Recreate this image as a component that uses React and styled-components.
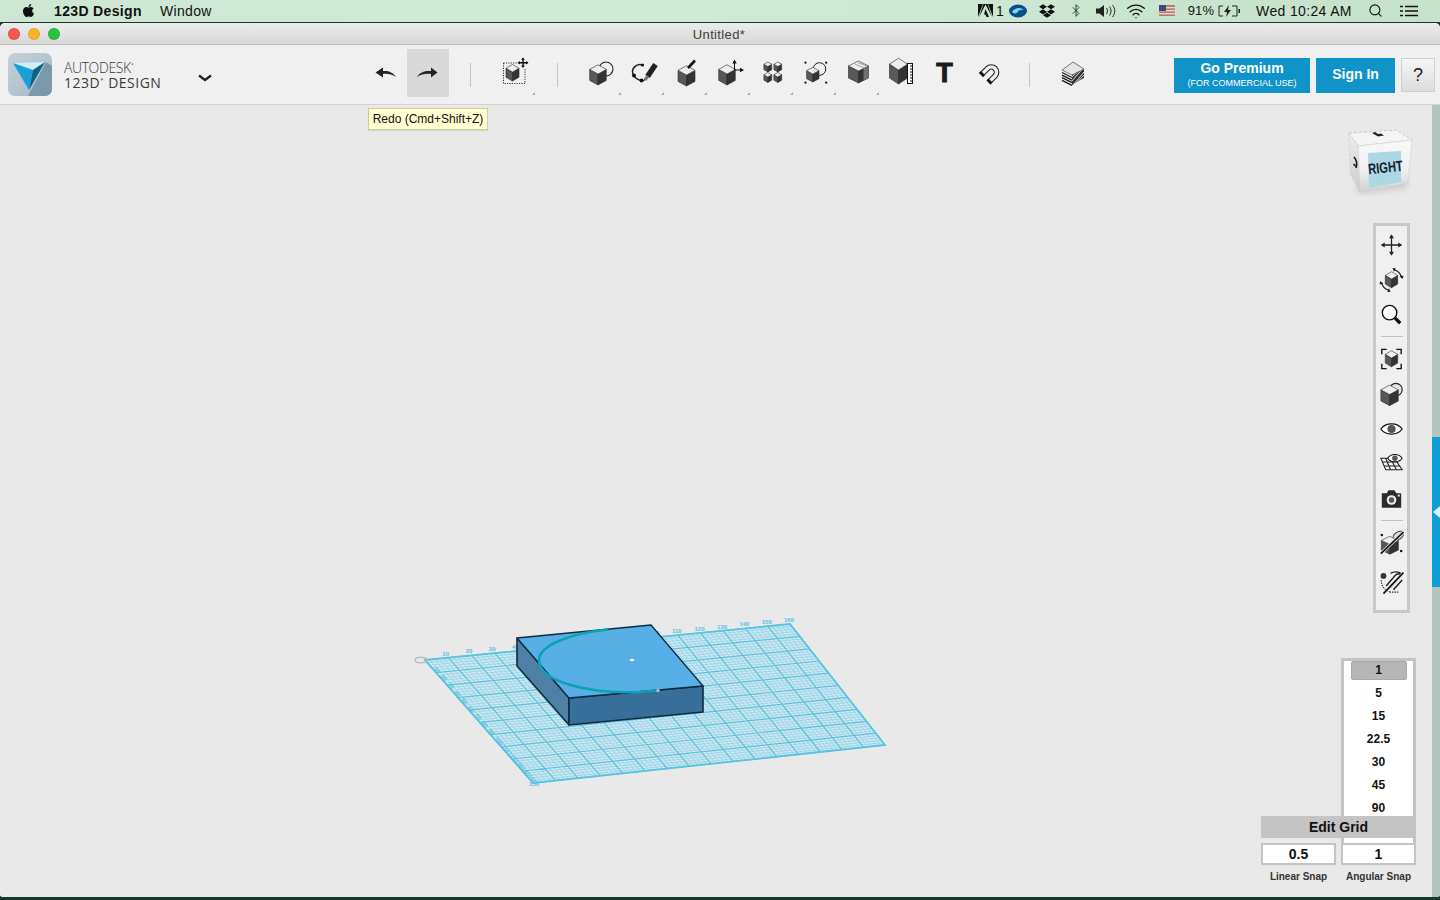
import React from 'react';
import styled, { createGlobalStyle } from 'styled-components';
import { FaApple, FaDropbox } from 'react-icons/fa';
import { Bluetooth, Wifi, Search } from 'lucide-react';

const Global = createGlobalStyle`
  html, body { margin: 0; padding: 0; height: 100%; overflow: hidden; background: #17382c; }
  #root { height: 100%; }
  * { box-sizing: border-box; }
`;

const Screen = styled.div`
  width: 1440px; height: 900px; display: flex; flex-direction: column;
  font-family: "Liberation Sans", Arial, sans-serif; background: #17382c;
`;
const MenuBar = styled.div`
  height: 23px; flex: none; display: flex; align-items: center; padding: 0 0 1px 21px;
  background: linear-gradient(90deg, #cde6d3 0%, #d2ead8 40%, #c6e2ca 100%);
  border-bottom: 1px solid #17382c; color: #111; font-size: 14px;
`;
const MenuItem = styled.span`
  margin-left: ${p => p.$ml || 0}px; font-weight: ${p => (p.$bold ? 700 : 400)}; white-space: nowrap; letter-spacing: 0.35px;
`;
const MenuExtras = styled.div`
  margin-left: auto; display: flex; align-items: center; height: 22px; color: #111;
`;
const Extra = styled.span`
  display: inline-flex; align-items: center; justify-content: center; width: ${p => p.$w}px;
  margin-left: ${p => p.$ml || 0}px; font-size: ${p => p.$fs || 14}px; white-space: nowrap; letter-spacing: ${p => p.$ls || 0}px;
`;
const Window = styled.div`
  flex: 1; display: flex; flex-direction: column; min-height: 0; margin-bottom: 3px;
  border-radius: 5px 5px 3px 3px; overflow: hidden; background: #e9e9e9;
`;
const TitleBar = styled.div`
  height: 22px; flex: none; position: relative; display: flex; align-items: center; justify-content: center;
  padding: 1px 2px 0 0; background: linear-gradient(#ececec, #d9d9d9); border-bottom: 1px solid #bdbdbd;
  font-size: 13px; letter-spacing: 0.35px; color: #3c3c3c;
`;
const Lights = styled.div`
  position: absolute; left: 8px; top: 5px; display: flex; gap: 8px;
`;
const Light = styled.span`
  width: 12px; height: 12px; border-radius: 50%; background: ${p => p.$c}; box-shadow: inset 0 0 0 1px rgba(0,0,0,.08);
`;
const Toolbar = styled.div`
  height: 60px; flex: none; display: flex; align-items: flex-start; padding: 4px 5px 0 8px;
  background: #f0f0f0; border-bottom: 1px solid #d2d2d2;
`;
const Logo = styled.div`
  width: 44px; height: 43px; flex: none; border-radius: 7px; overflow: hidden; margin-top: 4px;
  background: linear-gradient(135deg, #c6d2da, #a3b6c3);
`;
const Brand = styled.div`
  width: 110px; margin-left: 12px; margin-top: 11px; font-family: "Open Sans", sans-serif; color: #3a3a3a; line-height: 15px;
  sup { font-size: 6px; line-height: 0; vertical-align: 6px; }
`;
const BrandTop = styled.div`
  height: 15px; font-size: 14px; font-weight: 300; letter-spacing: -0.4px; white-space: nowrap;
`;
const BrandBottom = styled.div`
  height: 15px; font-size: 14px; letter-spacing: 0.5px; white-space: nowrap;
`;
const Chevron = styled.div`
  width: 14px; margin-left: 24px; margin-top: 25px; flex: none; display: flex;
`;
const UndoGroup = styled.div`
  margin-left: 153px; display: flex;
`;
const Slot = styled.div`
  width: ${p => p.$w || 43}px; height: 48px; flex: none; position: relative; display: flex; align-items: center; justify-content: center;
  background: ${p => (p.$active ? '#d8d8d8' : 'transparent')};
  &::after {
    content: ''; display: ${p => (p.$corner ? 'block' : 'none')}; position: absolute; right: 1px; bottom: 2px;
    border-style: solid; border-width: 0 0 3px 3px; border-color: transparent transparent #a8a8a8 transparent;
  }
`;
const Separator = styled.div`
  width: 1px; height: 24px; flex: none; background: #c4c4c4; margin: 14px ${p => p.$r || 21}px 0 ${p => p.$l || 21}px;
`;
const TIcon = styled.span`
  font-family: "Liberation Sans", sans-serif; font-weight: 700; font-size: 27px; line-height: 1; color: #1b1b1b;
  -webkit-text-stroke: 1px #1b1b1b;
`;
const Actions = styled.div`
  margin-left: auto; display: flex; gap: 6px; padding-top: 9px;
`;
const BlueButton = styled.div`
  width: ${p => p.$w}px; height: 35px; display: flex; flex-direction: column; align-items: center; justify-content: center;
  padding-bottom: 2px; background: #0f93c8; color: #fff; font-weight: 700; font-size: 14px; line-height: 17px;
`;
const SubLabel = styled.span`
  font-size: 9px; font-weight: 400; line-height: 12px; white-space: nowrap;
`;
const HelpButton = styled.div`
  width: 34px; height: 34px; display: flex; align-items: center; justify-content: center;
  background: linear-gradient(#f6f6f6, #dcdcdc); border: 1px solid #cfcfcf; font-size: 18px; color: #222;
`;
const Workspace = styled.div`
  flex: 1; display: flex; min-height: 0;
`;
const Viewport = styled.div`
  flex: 1; position: relative; background: #e9e9e9; overflow: hidden;
`;
const Scene = styled.svg`
  position: absolute; left: 0; top: 0;
`;
const Tooltip = styled.div`
  position: absolute; left: 368px; top: 3px; width: 120px; height: 22px; display: flex; align-items: center; justify-content: center;
  background: #ffffd2; border: 1px solid #cdcd9e; font-size: 12px; color: #111; white-space: nowrap; box-shadow: 0 1px 1px rgba(0,0,0,.08);
`;
const NavCube = styled.svg`
  position: absolute; right: 12px; top: 15px;
`;
const ToolPanel = styled.div`
  position: absolute; right: 22px; top: 118px; width: 37px; height: 390px; display: flex; flex-direction: column; align-items: center;
  padding-top: 1px; background: #f0f0f0; border: 3px solid #c8c8c8;
`;
const ToolSlot = styled.div`
  height: 35px; width: 100%; flex: none; display: flex; align-items: center; justify-content: center; margin-top: ${p => p.$mt || 0}px;
`;
const ToolRule = styled.div`
  width: 22px; height: 1px; flex: none; background: #c2c2c2; margin: 4px 0 ${p => p.$b || 4}px;
`;
const SnapPanel = styled.div`
  position: absolute; right: 16px; top: 553px; width: 155px; display: flex; flex-direction: column; align-items: flex-end;
`;
const SnapList = styled.div`
  width: 75px; height: 158px; display: flex; flex-direction: column; align-items: center;
  background: #fff; border: solid #c4c4c4; border-width: 3px 3px 0;
`;
const SnapItem = styled.div`
  width: 56px; height: 19px; flex: none; margin-bottom: 4px; padding-bottom: 1px; display: flex; align-items: center; justify-content: center;
  border-radius: 3px; font-size: 12px; font-weight: 700; color: #111;
  background: ${p => (p.$on ? '#b6b6b6' : 'transparent')}; box-shadow: ${p => (p.$on ? 'inset 0 0 0 1px #a8a8a8' : 'none')};
`;
const EditBar = styled.div`
  width: 155px; height: 22px; display: flex; align-items: center; justify-content: center;
  background: #c4c4c4; font-size: 14px; font-weight: 700; color: #111;
`;
const ListTail = styled.div`
  width: 75px; height: 5px; background: #fff; border: solid #c4c4c4; border-width: 0 3px;
`;
const SnapRow = styled.div`
  width: 155px; display: flex; gap: 5px;
`;
const SnapCol = styled.div`
  width: 75px; display: flex; flex-direction: column; align-items: center;
`;
const SnapField = styled.div`
  width: 75px; height: 22px; display: flex; align-items: center; justify-content: center;
  background: #fff; border: 2px solid #c4c4c4; font-size: 14px; font-weight: 700; color: #111;
`;
const SnapLabel = styled.div`
  margin-top: 6px; font-size: 10px; line-height: 12px; font-weight: 700; color: #333; white-space: nowrap;
`;
const SideStrip = styled.div`
  width: 8px; flex: none; position: relative; background: #b4c4bd;
`;
const SideTab = styled.div`
  position: absolute; left: 0; top: 332px; width: 8px; height: 150px; display: flex; align-items: center; justify-content: flex-end;
  background: #0d9fd3;
  &::after { content: ''; border-style: solid; border-width: 6px 7px 6px 0; border-color: transparent #d8f0f8 transparent transparent; }
`;

/* ---------- icon helpers ---------- */
const Cube = ({ x, y, r, w: width, top = '#eeeeee', left = '#585858', right = '#333333' }) => {
  const w = width || r * 0.9, h = r * 0.42;
  return (
    <g stroke="#2a2a2a" strokeWidth="0.6" strokeLinejoin="round">
      <polygon points={`${x},${y} ${x - w},${y - h} ${x - w},${y + r - h} ${x},${y + r}`} fill={left} />
      <polygon points={`${x},${y} ${x + w},${y - h} ${x + w},${y + r - h} ${x},${y + r}`} fill={right} />
      <polygon points={`${x},${y} ${x - w},${y - h} ${x},${y - h * 2} ${x + w},${y - h}`} fill={top} />
    </g>
  );
};
const Ic = ({ children, s = 32 }) => <svg width={s} height={s} viewBox="0 0 32 32" fill="none">{children}</svg>;
const Dot = ({ x, y, r = 1.1 }) => <circle cx={x} cy={y} r={r} fill="#111" />;

const Undo = () => <Ic><path d="M13 10.5 L5.5 15.5 L13 20.5 V17 C17 16.5 22 17 26 20 C23 15 18 13.5 13 14 Z" fill="#222" /></Ic>;
const Redo = () => <Ic><path d="M19 10.5 L25.5 15.5 L19 20.5 V17 C14 16.5 9 17 5 20 C8 15 13 13.5 19 14 Z" fill="#222" /></Ic>;
const BoxSelect = () => (
  <Ic>
    <path d="M4.5 6 H19 M4.5 6 V26.5 H26 V11" stroke="#333" strokeWidth="1" strokeDasharray="1.2 1.2" />
    <Cube x={13.5} y={15} r={9} w={6.5} />
    <path d="M24 1.5 V10 M19.5 5.7 H28.5" stroke="#111" strokeWidth="1.4" />
    <path d="M24 0.5 L22.2 3 H25.8 Z M24 11 L22.2 8.5 H25.8 Z M18.5 5.7 L21 3.9 V7.5 Z M29.5 5.7 L27 3.9 V7.5 Z" fill="#111" />
  </Ic>
);
const Primitive = () => <Ic><circle cx="21" cy="12" r="7" stroke="#222" strokeWidth="1.1" /><Cube x={13} y={17} r={11} w={8.3} /></Ic>;
const Sketch = () => (
  <Ic>
    <path d="M14.5 8 C8 6 3 12 5 17 C6.5 20.5 10 23 14 24 C15.5 24 16.5 23 17 22" stroke="#222" strokeWidth="1.5" />
    <Dot x={14.5} y={8} r={1.6} /><Dot x={6} y={18.5} r={1.9} /><Dot x={13.5} y={23.5} r={1.9} />
    <path d="M19.5 19.5 L27.5 7.5" stroke="#222" strokeWidth="5.4" />
    <path d="M17 23 L20 19" stroke="#777" strokeWidth="3" />
  </Ic>
);
const Construct = () => <Ic><Cube x={15.5} y={18} r={11} w={8.5} /><path d="M17 11 L24 3.5" stroke="#111" strokeWidth="2.6" /></Ic>;
const Modify = () => (
  <Ic>
    <Cube x={13} y={17} r={11} w={8.3} />
    <path d="M20.5 13 V5 M20.5 13 L28 13" stroke="#111" strokeWidth="1" />
    <path d="M20.5 2.5 L18.3 6.5 H22.7 Z M30 13 L26 10.8 V15.2 Z" fill="#111" />
  </Ic>
);
const Pattern = () => (
  <Ic>
    <Cube x={10.8} y={9.5} r={5.4} w={3.9} /><Cube x={20.8} y={9.5} r={5.4} w={3.9} />
    <Cube x={10.8} y={20} r={5.4} w={3.9} /><Cube x={20.8} y={20} r={5.4} w={3.9} />
  </Ic>
);
const Grouping = () => (
  <Ic>
    <circle cx="19.5" cy="12" r="6.3" stroke="#222" strokeWidth="1" />
    <Cube x={12.8} y={17} r={8} w={6.2} />
    <Dot x={5.5} y={5.7} /><Dot x={26.2} y={5.7} /><Dot x={5.5} y={25.7} /><Dot x={26.2} y={25.7} />
  </Ic>
);
const Combine = () => (
  <Ic>
    <Cube x={15.5} y={14} r={12} w={10} />
    <polygon points="25.5,9 25.5,21 20.5,23.5 20.5,11.5" fill="#707070" />
    <path d="M12 7 L22 11.5 M15 5.5 L25 9.5" stroke="#8a8a8a" strokeWidth=".8" />
  </Ic>
);
const Measure = () => (
  <Ic>
    <Cube x={12.5} y={13} r={14} w={9} />
    <rect x="21.5" y="6.5" width="5" height="20" fill="#fff" stroke="#111" strokeWidth="1" />
    <path d="M24 9 H26.5 M24 12 H26.5 M24 15 H26.5 M24 18 H26.5 M24 21 H26.5 M24 24 H26.5" stroke="#111" strokeWidth="1" />
  </Ic>
);
const Magnet = () => {
  const d = 'M9 18 L15.5 11.5 A5.3 5.3 0 0 1 23 19 L16.5 25.5';
  return (
    <Ic>
      <path d={d} stroke="#222" strokeWidth="5.6" />
      <path d={d} stroke="#f0f0f0" strokeWidth="3.4" />
      <path d="M9 18 L11 16 M16.5 25.5 L18.5 23.5" stroke="#111" strokeWidth="5.6" />
    </Ic>
  );
};
const Layers = () => (
  <Ic>
    <polygon points="15,18 27,12 27,21 15,28" fill="#333" />
    <path d="M17 27 L27 15 M20 25.5 L27 18 M15 24 L25 12.5 M15 20 L21 14.5" stroke="#eee" strokeWidth=".9" />
    <polygon points="16,5 27,12 15,18 5,13" fill="#e6e6e6" stroke="#444" strokeWidth=".7" />
    {[0, 1, 2, 3].map(i => (
      <path key={i} d={`M5 ${15.5 + i * 2.6} L15 ${20.5 + i * 2.6}`} stroke="#1c1c1c" strokeWidth="1.3" />
    ))}
  </Ic>
);
const Move = () => (
  <Ic>
    <path d="M16 6 V26 M6 16 H26" stroke="#222" strokeWidth="1.3" />
    <path d="M16 5 L13.5 9 H18.5 Z M16 27 L13.5 23 H18.5 Z M5 16 L9 13.5 V18.5 Z M27 16 L23 13.5 V18.5 Z" fill="#222" />
  </Ic>
);
const Orbit = () => (
  <Ic>
    <Cube x={16} y={15} r={9} w={6.4} />
    <path d="M19 5.5 C22.5 6.5 25.5 9.5 26.3 13.5 M13 26.5 C9.5 25.5 6.5 22.5 5.7 18.5" stroke="#222" strokeWidth="1.3" />
    <path d="M17 3.5 L20.5 3.8 L18.5 7.5 Z M15 28.5 L11.5 28.2 L13.5 24.5 Z M27.5 15 L24.5 12 L28.5 11.5 Z M4.5 17 L7.5 20 L3.5 20.5 Z" fill="#222" />
  </Ic>
);
const Zoom = () => (
  <Ic><circle cx="14" cy="13.5" r="7.5" stroke="#111" strokeWidth="1.4" fill="#fff" /><path d="M19.5 19 L25 24.5" stroke="#111" strokeWidth="3.4" /></Ic>
);
const Fit = () => (
  <Ic>
    <path d="M6 11 V6 H11 M21 6 H26 V11 M26 21 V26 H21 M11 26 H6 V21" stroke="#111" strokeWidth="1.4" />
    <Cube x={16} y={15} r={9} w={6.4} />
  </Ic>
);
const Persp = () => <Ic><circle cx="20.5" cy="11.5" r="6.5" fill="#e6e6e6" stroke="#222" strokeWidth="1.2" /><Cube x={14} y={16.5} r={11.5} w={9} /></Ic>;
const Eye = () => (
  <Ic>
    <path d="M5 16 C10 9 22 9 27 16 C22 23 10 23 5 16 Z" stroke="#111" strokeWidth="1.3" fill="#fff" />
    <circle cx="16" cy="16" r="4.2" fill="#555" />
  </Ic>
);
const GridEye = () => (
  <Ic>
    <polygon points="5,10 19,10 27,22 10,22" fill="#f4f4f4" stroke="#222" strokeWidth="1.1" />
    <path d="M7 14 H22 M8.5 18 H25 M10 10 L15 22 M15 10 L21 22" stroke="#222" strokeWidth="1.1" />
    <path d="M12 10 C15.5 5 23.5 5 27 10 C23.5 15 15.5 15 12 10 Z" fill="#fff" stroke="#111" strokeWidth="1.1" />
    <circle cx="19.5" cy="10" r="2.8" fill="#555" />
  </Ic>
);
const Camera = () => (
  <Ic>
    <path d="M6 10 H11 L13 7 H19 L21 10 H26 V25 H6 Z" fill="#2b2b2b" />
    <circle cx="16" cy="17" r="5" fill="#eee" /><circle cx="16" cy="17" r="2.8" fill="#555" />
    <rect x="22.5" y="11.5" width="2" height="2" fill="#eee" />
  </Ic>
);
const HideCube = () => (
  <Ic>
    <ellipse cx="23" cy="8.5" rx="6" ry="3.8" transform="rotate(-35 23 8.5)" fill="#ddd" stroke="#444" strokeWidth="1" />
    <Cube x={14.3} y={17.5} r={10} w={8.8} />
    <path d="M5 27 L28.3 4.7" stroke="#f0f0f0" strokeWidth="3.2" />
    <path d="M5 27 L28.3 4.7" stroke="#111" strokeWidth="1.7" />
    <Dot x={6} y={7.7} r={1.3} /><Dot x={26} y={24.3} r={1.3} />
  </Ic>
);
const HideSketch = () => (
  <Ic>
    <circle cx="7.7" cy="8.7" r="3" fill="#333" />
    <path d="M5.5 13 C5 18 9 24 14 25 M14 25.5 H24" stroke="#333" strokeWidth="1.2" strokeDasharray="1.5 1" />
    <path d="M15 6 C20 3 26 5 27 8 M10.5 19 L20 8 C22 6 25 6.5 26 8 M13.5 22 L24 10.5 M18 23 L27 13" stroke="#222" strokeWidth="1.5" />
    <path d="M7.7 27 L28.3 5.3" stroke="#f0f0f0" strokeWidth="3" />
    <path d="M7.7 27 L28.3 5.3" stroke="#111" strokeWidth="1.7" />
  </Ic>
);

/* ---------- grid ---------- */
const quad = [[425, 660], [790, 624], [885, 745], [533, 783]];
const homography = () => {
  const [[x0, y0], [x1, y1], [x2, y2], [x3, y3]] = quad;
  const dx1 = x1 - x2, dx2 = x3 - x2, sx = x0 - x1 + x2 - x3;
  const dy1 = y1 - y2, dy2 = y3 - y2, sy = y0 - y1 + y2 - y3;
  const den = dx1 * dy2 - dx2 * dy1;
  const g = (sx * dy2 - dx2 * sy) / den, h = (dx1 * sy - sx * dy1) / den;
  const a = x1 - x0 + g * x1, b = x3 - x0 + h * x3, c = x0;
  const d = y1 - y0 + g * y1, e = y3 - y0 + h * y3, f = y0;
  return (u, v) => {
    const w = g * u + h * v + 1;
    return [(a * u + b * v + c) / w, (d * u + e * v + f) / w];
  };
};
const proj = homography();
const UDIV = 16, VDIV = 10, USUB = 5, VSUB = 5;
const line = (p, q) => `M${p[0].toFixed(1)} ${p[1].toFixed(1)}L${q[0].toFixed(1)} ${q[1].toFixed(1)}`;
const buildLines = major => {
  let d = '';
  const us = major ? 1 : USUB, vs = major ? 1 : VSUB;
  const nu = UDIV * us, nv = VDIV * vs;
  for (let i = 0; i <= nu; i++) if (major || i % us) d += line(proj(i / nu, 0), proj(i / nu, 1));
  for (let j = 0; j <= nv; j++) if (major || j % vs) d += line(proj(0, j / nv), proj(1, j / nv));
  return d;
};
const minorPath = buildLines(false);
const majorPath = buildLines(true);
const topLabels = Array.from({ length: UDIV }, (_, i) => ({ p: proj((i + 1) / UDIV, 0), t: String((i + 1) * 10) }));
const leftLabels = Array.from({ length: 15 }, (_, i) => ({ p: proj(0, (i + 1) / 16), t: String((i + 1) * 10) }));
const corners = quad.map(p => p.join(',')).join(' ');

const GridScene = () => (
  <Scene width="1432" height="791" viewBox="0 105 1432 791">
    <polygon points={corners} fill="#cfe8f1" />
    <path d={minorPath} stroke="#8fd2e6" strokeWidth=".75" fill="none" />
    <path d={majorPath} stroke="#5cc0dc" strokeWidth="1.2" fill="none" />
    <polygon points={corners} fill="none" stroke="#58c4e0" strokeWidth="1.8" />
    <ellipse cx="421" cy="660" rx="6" ry="2.8" fill="none" stroke="#b6bfc4" strokeWidth="1.5" />
    <g fontFamily="Liberation Sans, sans-serif" fontSize="6" fontWeight="700" fill="#58c0dc">
      {topLabels.map(l => <text key={l.t} x={l.p[0] - 6} y={l.p[1] - 2}>{l.t}</text>)}
      {leftLabels.map(l => (
        <text key={l.t} x={l.p[0] + 1} y={l.p[1] + 1} transform={`rotate(50 ${l.p[0] + 1} ${l.p[1] + 1})`}>{l.t}</text>
      ))}
      <text x="529" y="786">150</text>
    </g>
    <g strokeLinejoin="round" stroke="#0d2c44" strokeWidth="1.6">
      <polygon points="517,638 569,698 569,725 517,666" fill="#4e7fa4" />
      <polygon points="569,698 703,686 703,712 569,725" fill="#376e9a" />
      <polygon points="517,638 651,625 703,686 569,698" fill="#58afe6" strokeWidth="1.3" />
    </g>
    <path d="M608 629.5 C572 633 539 645 539 660 C539 680 582 694 640 692 L658 690.5" fill="none" stroke="#0ca2b4" strokeWidth="2.6" />
    <ellipse cx="632" cy="660" rx="2.2" ry="1.2" fill="#fff" />
    <circle cx="658" cy="690.5" r="1.8" fill="#8fc3d2" />
  </Scene>
);

const ViewCube = () => (
  <NavCube width="80" height="90" viewBox="0 0 80 90">
    <defs>
      <linearGradient id="fr" x1="0" y1="0" x2="0" y2="1"><stop offset="0" stopColor="#f8f8f8" /><stop offset=".6" stopColor="#efefef" /><stop offset="1" stopColor="#cfcfcf" /></linearGradient>
      <linearGradient id="sd" x1="0" y1="0" x2="0" y2="1"><stop offset="0" stopColor="#eeeeee" /><stop offset="1" stopColor="#cccccc" /></linearGradient>
      <filter id="bl"><feGaussianBlur stdDeviation="3" /></filter>
      <filter id="soft"><feGaussianBlur stdDeviation=".35" /></filter>
    </defs>
    <polygon points="18,74 66,68 68,60 18,62" fill="#c0c0c0" filter="url(#bl)" opacity=".75" />
    <g filter="url(#soft)">
      <polygon points="9,13 57,10 72,20 18,26" fill="#f4f4f4" stroke="#bdbdbd" strokeWidth=".8" strokeDasharray="3 2" />
      <polygon points="9,13 18,26 20,72 10,54" fill="url(#sd)" stroke="#c8c8c8" strokeWidth=".6" strokeDasharray="3 2" />
      <polygon points="18,26 72,20 68,63 20,72" fill="url(#fr)" stroke="#d0d0d0" strokeWidth=".6" />
      <polygon points="28,33 61,31 61,62 29,68" fill="#aed7e6" />
      <path d="M32 13 L38 16.5 L44 15.5 L41 13.5 L38 14 L35 12 Z" fill="#222" />
      <path d="M14 37 C16.5 40 17.5 44 16 48 M13.5 44 L16.5 47" stroke="#222" strokeWidth="1.7" fill="none" />
    </g>
    <text transform="translate(46 52.5) rotate(-6) scale(.74 1)" textAnchor="middle" fontFamily="Liberation Sans, sans-serif" fontSize="15" fontWeight="700" fill="#14242f">RIGHT</text>
  </NavCube>
);

const LogoMark = () => (
  <svg width="44" height="43" viewBox="0 0 44 43">
    <polygon points="20,43 44,43 44,13 38,9" fill="#7b98ab" />
    <polygon points="5,10 37,9 25,17" fill="#cfeef8" />
    <polygon points="5,10 25,17 21,37" fill="#1b9fd9" />
    <polygon points="37,9 25,17 21,37" fill="#0b6288" />
  </svg>
);

const Adobe = () => (
  <svg width="15" height="15" viewBox="0 0 15 15"><path d="M0 1 H5 L0 14 Z M15 1 H10 L15 14 Z M7.5 6 L11 14 H8.5 L7.5 11.5 H6 Z M5.5 1 H9.5 L14 14 L7.5 1.5 L1 14 Z" fill="#111" /></svg>
);
const Blob = () => (
  <svg width="18" height="14" viewBox="0 0 18 14">
    <ellipse cx="9" cy="7" rx="9" ry="6.5" fill="#0b4e8c" />
    <path d="M3 8 C6 3 12 3 15 6 C12 5 9 6 8 9 C6 10 4 9 3 8 Z" fill="#7fd4ee" />
  </svg>
);
const Speaker = () => (
  <svg width="22" height="14" viewBox="0 0 22 14" fill="none">
    <path d="M0 4.5 H3.5 L8 1 V13 L3.5 9.5 H0 Z" fill="#222" />
    <path d="M10.5 4 C11.8 6 11.8 8 10.5 10 M13.5 2.5 C15.5 5.5 15.5 8.5 13.5 11.5 M16.5 1 C19.5 5 19.5 9 16.5 13" stroke="#222" strokeWidth="1" />
  </svg>
);
const Flag = () => (
  <svg width="16" height="11" viewBox="0 0 16 11">
    <rect width="16" height="11" fill="#b57a72" /><rect y="2" width="16" height="1.4" fill="#e5d7cf" /><rect y="5" width="16" height="1.4" fill="#e5d7cf" /><rect y="8" width="16" height="1.4" fill="#e5d7cf" />
    <rect width="7" height="6" fill="#3d4a72" />
  </svg>
);
const Battery = () => (
  <svg width="24" height="14" viewBox="0 0 24 14" fill="none">
    <path d="M6 2 H2 V12 H6 M15 2 H20 V12 H15" stroke="#222" strokeWidth="1" />
    <path d="M12 1 L7 8 H10 L9 13 L14 6 H11 Z" fill="#222" />
    <rect x="21.5" y="5" width="1.5" height="4" fill="#222" />
  </svg>
);
const ListGlyph = () => (
  <svg width="18" height="12" viewBox="0 0 18 12">
    <path d="M5 1.5 H18 M5 6 H18 M5 10.5 H18" stroke="#111" strokeWidth="1.6" />
    <path d="M0 1.5 H3 M0 6 H3 M0 10.5 H3" stroke="#111" strokeWidth="1.6" />
  </svg>
);

const snaps = ['1', '5', '15', '22.5', '30', '45', '90'];

export default function App() {
  return (
    <Screen>
      <Global />
      <MenuBar>
        <FaApple size={15} color="#111" />
        <MenuItem $ml={18} $bold>123D Design</MenuItem>
        <MenuItem $ml={18}>Window</MenuItem>
        <MenuExtras>
          <Extra $w={16}><Adobe /></Extra>
          <Extra $w={10} $ml={2} $fs={14}>1</Extra>
          <Extra $w={18} $ml={4}><Blob /></Extra>
          <Extra $w={18} $ml={11}><FaDropbox size={16} /></Extra>
          <Extra $w={14} $ml={13}><Bluetooth size={15} strokeWidth={1.3} /></Extra>
          <Extra $w={22} $ml={13}><Speaker /></Extra>
          <Extra $w={20} $ml={8}><Wifi size={20} strokeWidth={1.6} /></Extra>
          <Extra $w={16} $ml={13}><Flag /></Extra>
          <Extra $w={28} $ml={12} $fs={13} $ls={0.2}>91%</Extra>
          <Extra $w={24} $ml={2}><Battery /></Extra>
          <Extra $w={96} $ml={15} $ls={0.35}>Wed 10:24 AM</Extra>
          <Extra $w={16} $ml={15}><Search size={15} strokeWidth={1.8} /></Extra>
          <Extra $w={18} $ml={17}><ListGlyph /></Extra>
          <Extra $w={22} />
        </MenuExtras>
      </MenuBar>
      <Window>
        <TitleBar>
          <Lights>
            <Light $c="#f4584e" /><Light $c="#f8b32c" /><Light $c="#2cc13e" />
          </Lights>
          Untitled*
        </TitleBar>
        <Toolbar>
          <Logo><LogoMark /></Logo>
          <Brand>
            <BrandTop>AUTODESK<sup>*</sup></BrandTop>
            <BrandBottom>123D<sup>*</sup> DESIGN</BrandBottom>
          </Brand>
          <Chevron>
            <svg width="14" height="8" viewBox="0 0 14 8" fill="none"><path d="M1 1.5 L7 6 L13 1.5" stroke="#222" strokeWidth="2.2" /></svg>
          </Chevron>
          <UndoGroup>
            <Slot $w={42}><Undo /></Slot>
            <Slot $w={42} $active><Redo /></Slot>
          </UndoGroup>
          <Separator $r={23} />
          <Slot $w={42} $corner><BoxSelect /></Slot>
          <Separator />
          <Slot $corner><Primitive /></Slot>
          <Slot $corner><Sketch /></Slot>
          <Slot $corner><Construct /></Slot>
          <Slot $corner><Modify /></Slot>
          <Slot $corner><Pattern /></Slot>
          <Slot $corner><Grouping /></Slot>
          <Slot $corner><Combine /></Slot>
          <Slot><Measure /></Slot>
          <Slot><TIcon>T</TIcon></Slot>
          <Slot><Magnet /></Slot>
          <Separator $l={20} $r={22} />
          <Slot $w={42}><Layers /></Slot>
          <Actions>
            <BlueButton $w={136}>Go Premium<SubLabel>(FOR COMMERCIAL USE)</SubLabel></BlueButton>
            <BlueButton $w={79}>Sign In</BlueButton>
            <HelpButton>?</HelpButton>
          </Actions>
        </Toolbar>
        <Workspace>
          <Viewport>
            <GridScene />
            <Tooltip>Redo (Cmd+Shift+Z)</Tooltip>
            <ViewCube />
            <ToolPanel>
              <ToolSlot><Move /></ToolSlot>
              <ToolSlot><Orbit /></ToolSlot>
              <ToolSlot><Zoom /></ToolSlot>
              <ToolRule />
              <ToolSlot><Fit /></ToolSlot>
              <ToolSlot><Persp /></ToolSlot>
              <ToolSlot><Eye /></ToolSlot>
              <ToolSlot><GridEye /></ToolSlot>
              <ToolSlot><Camera /></ToolSlot>
              <ToolRule />
              <ToolSlot><HideCube /></ToolSlot>
              <ToolSlot $mt={5}><HideSketch /></ToolSlot>
            </ToolPanel>
            <SnapPanel>
              <SnapList>
                {snaps.map((s, i) => <SnapItem key={s} $on={i === 0}>{s}</SnapItem>)}
              </SnapList>
              <EditBar>Edit Grid</EditBar>
              <ListTail />
              <SnapRow>
                <SnapCol><SnapField>0.5</SnapField><SnapLabel>Linear Snap</SnapLabel></SnapCol>
                <SnapCol><SnapField>1</SnapField><SnapLabel>Angular Snap</SnapLabel></SnapCol>
              </SnapRow>
            </SnapPanel>
          </Viewport>
          <SideStrip><SideTab /></SideStrip>
        </Workspace>
      </Window>
    </Screen>
  );
}
